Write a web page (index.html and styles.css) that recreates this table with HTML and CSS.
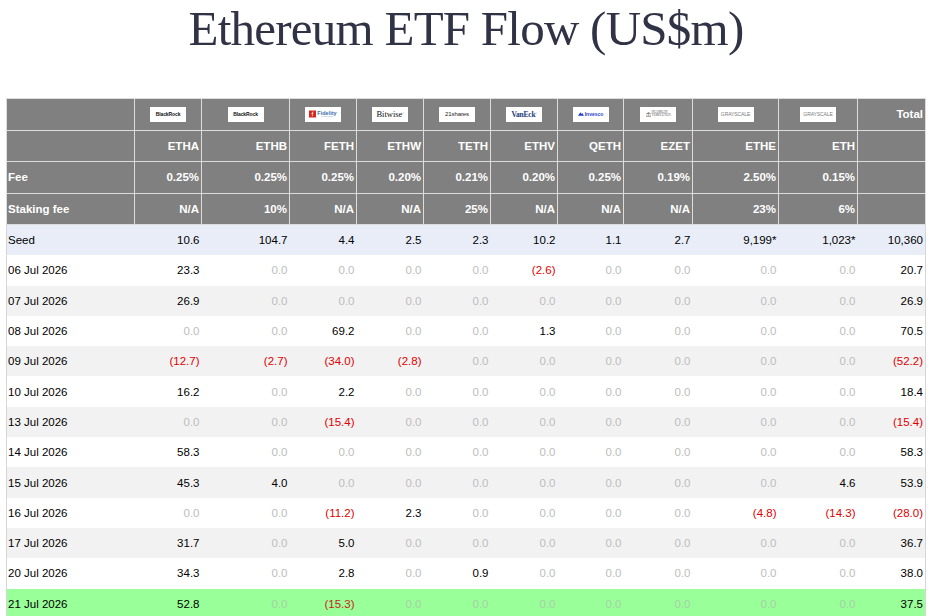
FILE: index.html
```html
<!DOCTYPE html>
<html>
<head>
<meta charset="utf-8">
<title>Ethereum ETF Flow (US$m)</title>
<link rel="stylesheet" href="styles.css">
</head>
<body>
<header class="title-wrap">
  <h1 class="title">Ethereum ETF Flow (US$m)</h1>
</header>
<main class="wrap">
<table class="flow">
  <colgroup>
    <col class="c-label"><col class="c-etha"><col class="c-ethb"><col class="c-feth"><col class="c-ethw"><col class="c-teth"><col class="c-ethv"><col class="c-qeth"><col class="c-ezet"><col class="c-ethe"><col class="c-eth"><col class="c-total">
  </colgroup>
  <thead>
    <tr class="logos">
      <th></th>
      <th class="logo-cell"><span class="logo lg-blackrock">BlackRock</span></th>
      <th class="logo-cell"><span class="logo lg-blackrock">BlackRock</span></th>
      <th class="logo-cell"><span class="logo lg-fidelity"><svg class="fid-mark" viewBox="0 0 8 8"><rect width="8" height="8" fill="#d7261e"/><path d="M3.3 6.5V3.4H2.6V2.8h.7v-.4c0-.7.4-1 1-1h.8v.6h-.6c-.3 0-.4.1-.4.4v.4h1v.6h-1v3.1z" fill="#fff"/></svg><span class="fid-txt">Fidelity<span class="fid-sub">INVESTMENTS</span></span></span></th>
      <th class="logo-cell"><span class="logo lg-bitwise">Bitwise<sup>°</sup></span></th>
      <th class="logo-cell"><span class="logo lg-21">21shares</span></th>
      <th class="logo-cell"><span class="logo lg-vaneck">VanEck<sup>°</sup></span></th>
      <th class="logo-cell"><span class="logo lg-invesco"><svg class="inv-mark" viewBox="0 0 10 6"><path d="M0 6L4 0l1.5 3L7 1.5 10 6z" fill="#1f3fd1"/></svg>Invesco</span></th>
      <th class="logo-cell"><span class="logo lg-franklin"><svg class="fr-mark" viewBox="0 0 8 8"><path d="M0 3L4 0l4 3z M1 3.5h1v3.5H1z M3.5 3.5h1v3.5h-1z M6 3.5h1v3.5H6z M0 7h8v1H0z" fill="#8a8a8a"/></svg><span class="fr-txt">FRANKLIN<br>TEMPLETON</span></span></th>
      <th class="logo-cell"><span class="logo lg-gray">GRAYSCALE</span></th>
      <th class="logo-cell"><span class="logo lg-gray">GRAYSCALE</span></th>
      <th class="num">Total</th>
    </tr>
    <tr>
      <th></th>
      <th class="num">ETHA</th><th class="num">ETHB</th><th class="num">FETH</th><th class="num">ETHW</th><th class="num">TETH</th><th class="num">ETHV</th><th class="num">QETH</th><th class="num">EZET</th><th class="num">ETHE</th><th class="num">ETH</th><th></th>
    </tr>
    <tr>
      <th class="lbl">Fee</th>
      <th class="num">0.25%</th><th class="num">0.25%</th><th class="num">0.25%</th><th class="num">0.20%</th><th class="num">0.21%</th><th class="num">0.20%</th><th class="num">0.25%</th><th class="num">0.19%</th><th class="num">2.50%</th><th class="num">0.15%</th><th></th>
    </tr>
    <tr>
      <th class="lbl">Staking fee</th>
      <th class="num">N/A</th><th class="num">10%</th><th class="num">N/A</th><th class="num">N/A</th><th class="num">25%</th><th class="num">N/A</th><th class="num">N/A</th><th class="num">N/A</th><th class="num">23%</th><th class="num">6%</th><th></th>
    </tr>
  </thead>
  <tbody>
    <tr class="seed"><td class="date">Seed</td><td>10.6</td><td>104.7</td><td>4.4</td><td>2.5</td><td>2.3</td><td>10.2</td><td>1.1</td><td>2.7</td><td>9,199*</td><td>1,023*</td><td>10,360</td></tr>
    <tr><td class="date">06 Jul 2026</td><td>23.3</td><td class="z">0.0</td><td class="z">0.0</td><td class="z">0.0</td><td class="z">0.0</td><td class="neg">(2.6)</td><td class="z">0.0</td><td class="z">0.0</td><td class="z">0.0</td><td class="z">0.0</td><td>20.7</td></tr>
    <tr class="alt"><td class="date">07 Jul 2026</td><td>26.9</td><td class="z">0.0</td><td class="z">0.0</td><td class="z">0.0</td><td class="z">0.0</td><td class="z">0.0</td><td class="z">0.0</td><td class="z">0.0</td><td class="z">0.0</td><td class="z">0.0</td><td>26.9</td></tr>
    <tr><td class="date">08 Jul 2026</td><td class="z">0.0</td><td class="z">0.0</td><td>69.2</td><td class="z">0.0</td><td class="z">0.0</td><td>1.3</td><td class="z">0.0</td><td class="z">0.0</td><td class="z">0.0</td><td class="z">0.0</td><td>70.5</td></tr>
    <tr class="alt"><td class="date">09 Jul 2026</td><td class="neg">(12.7)</td><td class="neg">(2.7)</td><td class="neg">(34.0)</td><td class="neg">(2.8)</td><td class="z">0.0</td><td class="z">0.0</td><td class="z">0.0</td><td class="z">0.0</td><td class="z">0.0</td><td class="z">0.0</td><td class="neg">(52.2)</td></tr>
    <tr><td class="date">10 Jul 2026</td><td>16.2</td><td class="z">0.0</td><td>2.2</td><td class="z">0.0</td><td class="z">0.0</td><td class="z">0.0</td><td class="z">0.0</td><td class="z">0.0</td><td class="z">0.0</td><td class="z">0.0</td><td>18.4</td></tr>
    <tr class="alt"><td class="date">13 Jul 2026</td><td class="z">0.0</td><td class="z">0.0</td><td class="neg">(15.4)</td><td class="z">0.0</td><td class="z">0.0</td><td class="z">0.0</td><td class="z">0.0</td><td class="z">0.0</td><td class="z">0.0</td><td class="z">0.0</td><td class="neg">(15.4)</td></tr>
    <tr><td class="date">14 Jul 2026</td><td>58.3</td><td class="z">0.0</td><td class="z">0.0</td><td class="z">0.0</td><td class="z">0.0</td><td class="z">0.0</td><td class="z">0.0</td><td class="z">0.0</td><td class="z">0.0</td><td class="z">0.0</td><td>58.3</td></tr>
    <tr class="alt"><td class="date">15 Jul 2026</td><td>45.3</td><td>4.0</td><td class="z">0.0</td><td class="z">0.0</td><td class="z">0.0</td><td class="z">0.0</td><td class="z">0.0</td><td class="z">0.0</td><td class="z">0.0</td><td>4.6</td><td>53.9</td></tr>
    <tr><td class="date">16 Jul 2026</td><td class="z">0.0</td><td class="z">0.0</td><td class="neg">(11.2)</td><td>2.3</td><td class="z">0.0</td><td class="z">0.0</td><td class="z">0.0</td><td class="z">0.0</td><td class="neg">(4.8)</td><td class="neg">(14.3)</td><td class="neg">(28.0)</td></tr>
    <tr class="alt"><td class="date">17 Jul 2026</td><td>31.7</td><td class="z">0.0</td><td>5.0</td><td class="z">0.0</td><td class="z">0.0</td><td class="z">0.0</td><td class="z">0.0</td><td class="z">0.0</td><td class="z">0.0</td><td class="z">0.0</td><td>36.7</td></tr>
    <tr><td class="date">20 Jul 2026</td><td>34.3</td><td class="z">0.0</td><td>2.8</td><td class="z">0.0</td><td>0.9</td><td class="z">0.0</td><td class="z">0.0</td><td class="z">0.0</td><td class="z">0.0</td><td class="z">0.0</td><td>38.0</td></tr>
    <tr class="today"><td class="date">21 Jul 2026</td><td>52.8</td><td class="z">0.0</td><td class="neg">(15.3)</td><td class="z">0.0</td><td class="z">0.0</td><td class="z">0.0</td><td class="z">0.0</td><td class="z">0.0</td><td class="z">0.0</td><td class="z">0.0</td><td>37.5</td></tr>
  </tbody>
</table>
</main>
</body>
</html>
```

FILE: styles.css
```css
html, body {
  margin: 0;
  padding: 0;
  background: #ffffff;
}

body {
  font-family: "Liberation Sans", Arial, sans-serif;
  color: #000;
}

.title-wrap {
  text-align: center;
  height: 98px;
}

.title {
  display: inline-block;
  margin: 0;
  font-family: "Liberation Serif", "Times New Roman", serif;
  font-weight: normal;
  font-size: 49px;
  line-height: 57px;
  letter-spacing: -0.75px;
  color: #303246;
  white-space: nowrap;
}

.wrap {
  padding: 0 6px;
}

.flow {
  width: 919px;
  table-layout: fixed;
  border-collapse: collapse;
  border-left: 1px solid #d6d6d6;
  border-right: 1px solid #d6d6d6;
  font-size: 11.5px;
}

.c-label { width: 128px; }
.c-etha { width: 67px; }
.c-ethb { width: 88px; }
.c-feth { width: 67px; }
.c-ethw { width: 67px; }
.c-teth { width: 67px; }
.c-ethv { width: 67px; }
.c-qeth { width: 66px; }
.c-ezet { width: 69px; }
.c-ethe { width: 86px; }
.c-eth { width: 79px; }
.c-total { width: 68px; }

.flow th {
  background: #808080;
  color: #fff;
  font-weight: bold;
  border: 1px solid #dcdcdc;
  height: 30.5px;
  padding: 0 2px;
  vertical-align: middle;
  white-space: nowrap;
}

.flow th.num { text-align: right; }
.flow th.lbl { text-align: left; padding-left: 1px; }
.flow th.logo-cell { text-align: center; padding: 0; }

.flow td {
  height: 30.3px;
  padding: 0 2px;
  text-align: right;
  white-space: nowrap;
  vertical-align: middle;
  color: #000;
}

.flow td.date {
  text-align: left;
  padding-left: 1px;
}

.flow td.z { color: #bdbdbd; }
.flow td.neg { color: #e00000; }

.flow tr.alt td { background: #f2f2f2; }
.flow tr.seed td { background: #e9edf8; }
.flow tr.today td { background: #99ff99; }
.flow tr.today td.z { color: #a8cfa8; }
.flow tr.today td.neg { color: #c81e1e; }

/* logos */
.logo {
  display: inline-flex;
  align-items: center;
  justify-content: center;
  width: 36px;
  height: 15px;
  background: #fff;
  color: #000;
  vertical-align: middle;
  overflow: hidden;
  white-space: nowrap;
  box-sizing: border-box;
  font-weight: normal;
}

.lg-blackrock {
  font-family: "Liberation Sans", Arial, sans-serif;
  font-weight: bold;
  font-size: 5px;
  letter-spacing: -0.1px;
  color: #111;
}

.lg-fidelity {
  gap: 1px;
}
.fid-mark { width: 7px; height: 8px; }
.fid-txt {
  display: inline-flex;
  flex-direction: column;
  font-family: "Liberation Sans", Arial, sans-serif;
  font-size: 5.5px;
  font-weight: bold;
  color: #3a6fb0;
  line-height: 5px;
}
.fid-sub {
  font-size: 1.6px;
  line-height: 2px;
  color: #8aa8cf;
  font-weight: normal;
}

.lg-bitwise {
  font-family: "Liberation Serif", "Times New Roman", serif;
  font-size: 8.5px;
  color: #111;
}
.lg-bitwise sup, .lg-vaneck sup {
  font-size: 3px;
  vertical-align: top;
  line-height: 4px;
}

.lg-21 {
  font-family: "Liberation Sans", Arial, sans-serif;
  font-size: 6px;
  color: #222;
  letter-spacing: -0.1px;
}

.lg-vaneck {
  font-family: "Liberation Serif", "Times New Roman", serif;
  font-weight: bold;
  font-size: 7.5px;
  color: #1c3b7a;
  letter-spacing: -0.2px;
}

.lg-invesco {
  font-family: "Liberation Sans", Arial, sans-serif;
  font-weight: bold;
  font-size: 5px;
  color: #1f3fd1;
  gap: 1px;
}
.inv-mark { width: 6px; height: 4px; }

.lg-franklin { gap: 1px; }
.fr-mark { width: 5px; height: 5px; }
.fr-txt {
  font-family: "Liberation Serif", "Times New Roman", serif;
  font-size: 3.2px;
  line-height: 3.5px;
  color: #555;
  text-align: left;
}

.lg-gray {
  font-family: "Liberation Sans", Arial, sans-serif;
  font-size: 5px;
  color: #7a7a7a;
  letter-spacing: -0.1px;
}
```
